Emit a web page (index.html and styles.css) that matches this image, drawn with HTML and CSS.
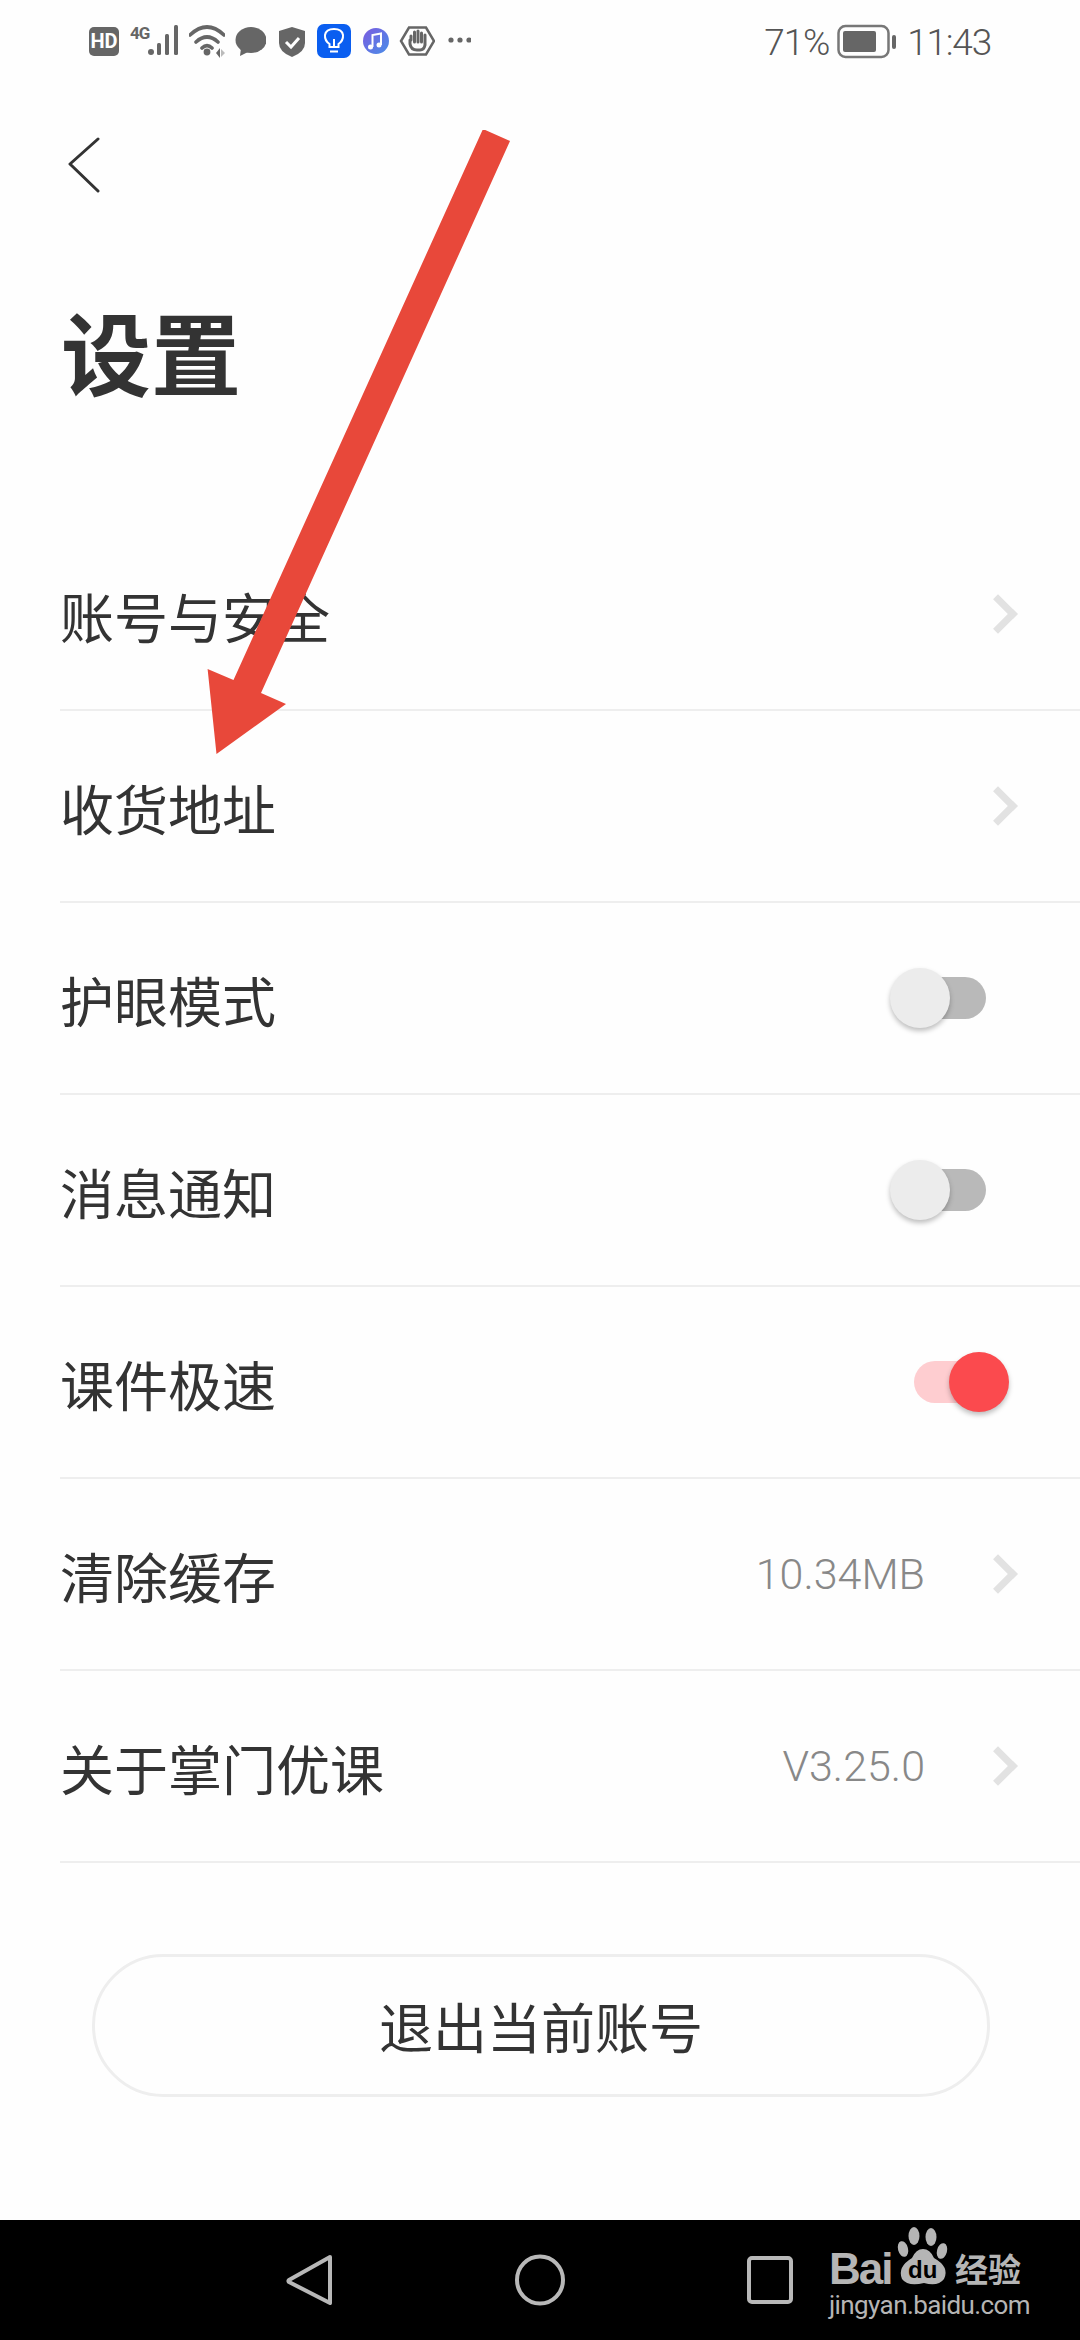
FILE: index.html
```html
<!DOCTYPE html>
<html lang="zh-CN">
<head>
  <meta charset="UTF-8">
  <meta name="viewport" content="width=device-width, initial-scale=1.0">
  <title>设置</title>
  <link rel="stylesheet" href="styles.css">
</head>
<body>
  <div class="status-bar">
    <div class="status-icons">
      <svg width="31" height="60" viewBox="0 0 31 60"><rect x="0" y="27" width="30" height="29" rx="5" fill="#666"/><text x="15" y="48" class="hd-text" text-anchor="middle">HD</text></svg>
      <svg width="49" height="60" viewBox="0 0 49 60"><text x="0" y="39" class="g-text">4G</text><circle cx="21" cy="52" r="3" fill="#666"/><rect x="27" y="43" width="4" height="12" rx="1.5" fill="#666"/><rect x="35" y="34" width="4" height="21" rx="1.5" fill="#666"/><rect x="44" y="25" width="4" height="30" rx="1.5" fill="#666"/></svg>
      <svg width="36" height="60" viewBox="0 0 36 60"><path d="M1 35 Q18 19 35 35 M7 42 Q18 32 29 42 M13 48 Q18 43 23 48" fill="none" stroke="#666" stroke-width="3.6" stroke-linecap="round"/><circle cx="18" cy="52" r="3.4" fill="#666"/><path d="M27 53 l4 -5 v10 z" fill="#666"/><path d="M32 49 l4 4 l-4 4 z" fill="#bbb"/></svg>
      <svg width="31" height="60" viewBox="0 0 31 60"><ellipse cx="16" cy="40" rx="15.5" ry="13" fill="#666"/><path d="M6 48 L5 56 L15 51 z" fill="#666"/></svg>
      <svg width="29" height="60" viewBox="0 0 29 60"><path d="M16 27 L29 31 V43 Q29 52 16 57 Q3 52 3 43 V31 z" fill="#666"/><path d="M10 42 L15 47 L23 38" fill="none" stroke="#fff" stroke-width="3"/></svg>
      <svg width="36" height="60" viewBox="0 0 36 60"><rect x="2" y="24" width="34" height="34" rx="7" fill="#0a5ef0"/><path d="M14.5 44 Q9.5 40.500 10 35 Q11 29 19 29 Q27 29 28 35 Q28.500 40.500 23.500 44 V47 H14.500 z M15 51.500 H23 M19 47 V39" fill="none" stroke="#fff" stroke-width="2"/></svg>
      <svg width="28" height="60" viewBox="0 0 28 60"><defs><linearGradient id="musicFill" x1="0" y1="0" x2="1" y2="1"><stop offset="0" stop-color="#7a5be0"/><stop offset="1" stop-color="#4a8ee8"/></linearGradient></defs><circle cx="15" cy="41" r="13" fill="url(#musicFill)"/><path d="M11.500 47 V35 L20 33.500 V45" fill="none" stroke="#fff" stroke-width="2"/><circle cx="9.500" cy="47" r="2.500" fill="#fff"/><circle cx="18" cy="45" r="2.500" fill="#fff"/></svg>
      <svg width="36" height="60" viewBox="0 0 36 60"><path d="M10 27.500 H27 L35 41 L27 54.500 H10 L2 41 z" fill="none" stroke="#666" stroke-width="2.500"/><path d="M11 40 V44 Q12 50 18 50 H21 Q25 50 26 45 V35 M12 40 V36 M15.500 42 V32 M19 42 V31 M22.500 42 V33" fill="none" stroke="#666" stroke-width="3" stroke-linecap="round"/></svg>
      <svg class="more-dots" width="26" height="60" viewBox="0 0 26 60"><circle cx="6" cy="40" r="2.600" fill="#666"/><circle cx="15" cy="40" r="2.600" fill="#666"/><circle cx="24" cy="40" r="2.600" fill="#666"/></svg>
    </div>
    <div class="status-right">
      <span class="status-text">71%</span>
      <svg class="battery" width="60" height="36" viewBox="0 0 60 36"><rect x="1.500" y="2" width="50" height="31" rx="7" fill="none" stroke="#777" stroke-width="2.500"/><rect x="6" y="7" width="33" height="21" rx="2" fill="#666"/><rect x="55" y="11" width="4" height="14" rx="2" fill="#666"/></svg>
      <span class="status-text">11:43</span>
    </div>
  </div>

  <div class="page">
    <div class="back-row">
      <svg width="34" height="58" viewBox="0 0 34 58"><path d="M31 2 L3 27 L31 54" fill="none" stroke="#333" stroke-width="3" stroke-linecap="round" stroke-linejoin="round"/></svg>
    </div>
    <h1 class="title">设置</h1>

    <div class="list">
      <div class="row"><span class="label">账号与安全</span><i class="chevron"></i></div>
      <div class="row"><span class="label">收货地址</span><i class="chevron"></i></div>
      <div class="row"><span class="label">护眼模式</span><div class="switch"><div class="knob"></div></div></div>
      <div class="row"><span class="label">消息通知</span><div class="switch"><div class="knob"></div></div></div>
      <div class="row"><span class="label">课件极速</span><div class="switch on"><div class="knob"></div></div></div>
      <div class="row"><span class="label">清除缓存</span><span class="value">10.34MB</span><i class="chevron"></i></div>
      <div class="row"><span class="label">关于掌门优课</span><span class="value">V3.25.0</span><i class="chevron"></i></div>
    </div>

    <div class="logout">退出当前账号</div>

    <svg class="arrow" width="310" height="630" viewBox="200 130 310 630"><polygon points="483,129 510,141 261,693 286,704 216.500,754 207.600,669 233.500,680" fill="#e8483a"/></svg>
  </div>

  <div class="nav-bar">
    <svg width="50" height="52" viewBox="0 0 50 52"><path d="M45 3 L4 26 Q3 27 4 28 L45 49 z" fill="none" stroke="#b8b8b8" stroke-width="4" stroke-linejoin="round"/></svg>
    <svg width="50" height="52" viewBox="0 0 50 52"><ellipse cx="25" cy="26" rx="23" ry="23.500" fill="none" stroke="#b8b8b8" stroke-width="4"/></svg>
    <svg width="50" height="52" viewBox="0 0 50 52"><rect x="4" y="4" width="42" height="44" rx="3" fill="none" stroke="#b8b8b8" stroke-width="4"/></svg>

    <div class="watermark">
      <svg class="paw" width="60" height="62" viewBox="0 0 60 62"><ellipse cx="20" cy="11" rx="5.500" ry="9" fill="#b5b5b5"/><ellipse cx="37" cy="12" rx="5.500" ry="9" fill="#b5b5b5"/><ellipse cx="9" cy="24" rx="5" ry="8" transform="rotate(-15 9 24)" fill="#b5b5b5"/><ellipse cx="48" cy="26" rx="5" ry="8" transform="rotate(15 48 26)" fill="#b5b5b5"/><path d="M29 24 Q36 24 40 33 Q56 42 50 54 Q44 62 30 58 Q14 62 8 54 Q3 42 18 33 Q22 24 29 24 z" fill="#b5b5b5"/></svg>
      <span class="wm-bai">Bai</span>
      <span class="wm-du">du</span>
      <span class="wm-cn">经验</span>
      <span class="wm-url">jingyan.baidu.com</span>
    </div>
  </div>
</body>
</html>
```
FILE: styles.css
```css
* {
  box-sizing: border-box;
}
body {
  margin: 0;
  width: 1080px;
  height: 2340px;
  display: flex;
  flex-direction: column;
  background: #fefefe;
  color: #333;
  font-family: "Noto Sans CJK SC", "Noto Sans", sans-serif;
  overflow: hidden;
}

/* status bar */
.status-bar {
  height: 84px;
  display: flex;
  justify-content: space-between;
  padding: 0 89px;
}
.status-icons {
  display: flex;
  gap: 10px;
  height: 60px;
}
.status-icons svg {
  display: block;
}
.hd-text {
  font: bold 20px "Roboto", sans-serif;
  fill: #fff;
}
.g-text {
  font: bold 17px "Roboto", sans-serif;
  fill: #666;
  letter-spacing: -1px;
}
.status-right {
  display: flex;
  align-items: center;
  height: 84px;
}
.status-text {
  font: 300 37px "Roboto", sans-serif;
  letter-spacing: -1.2px;
  color: #555;
}
.battery {
  margin: 0 10px 0 8px;
}

/* page */
.page {
  position: relative;
  flex: 1;
}
.back-row {
  height: 162px;
  padding: 53px 0 0 67px;
}
.back-row svg {
  display: block;
}
.title {
  margin: 0;
  padding: 44px 0 0 61px;
  font-size: 90px;
  font-weight: 700;
  line-height: 120px;
  height: 273px;
  color: #333;
}
.list {
  margin-left: 60px;
}
.row {
  height: 192px;
  display: flex;
  align-items: center;
  padding-right: 63px;
  border-bottom: 2px solid #eee;
}
.label {
  flex: 1;
  padding-top: 3px;
  font-size: 54px;
  color: #333;
}
.value {
  font: 300 43px "Roboto", sans-serif;
  color: #888;
  margin-right: 59px;
}
.chevron {
  width: 28px;
  height: 28px;
  margin-right: 5px;
  border-top: 7px solid #e2e2e2;
  border-right: 7px solid #e2e2e2;
  transform: rotate(45deg);
}

/* switch */
.switch {
  position: relative;
  width: 72px;
  height: 42px;
  margin-right: 31px;
  border-radius: 21px;
  background: #b9b9b9;
}
.knob {
  position: absolute;
  top: -9px;
  left: -24px;
  width: 60px;
  height: 60px;
  border-radius: 50%;
  background: #ececec;
  box-shadow: 0 3px 5px rgba(0, 0, 0, 0.25);
}
.switch.on {
  background: #fecdd0;
}
.switch.on .knob {
  left: 35px;
  background: #fb4a4e;
}

.logout {
  width: 898px;
  height: 143px;
  margin: 91px 0 0 92px;
  border: 3px solid #eee;
  border-radius: 72px;
  display: flex;
  align-items: center;
  justify-content: center;
  font-size: 54px;
  color: #333;
}

/* annotation drawn over the screen */
.arrow {
  position: absolute;
  left: 200px;
  top: 46px;
}

/* nav bar */
.nav-bar {
  position: relative;
  height: 120px;
  background: #000;
  display: flex;
  align-items: center;
  gap: 180px;
  padding-left: 285px;
}
.watermark {
  position: absolute;
  left: 829px;
  top: 5px;
  width: 194px;
  height: 95px;
  color: #b5b5b5;
}
.watermark span {
  position: absolute;
  white-space: nowrap;
}
.paw {
  position: absolute;
  left: 65px;
  top: 0;
}
.wm-bai {
  left: 0;
  top: 25px;
  font: bold 44px/38px "Liberation Sans", sans-serif;
  letter-spacing: -2px;
}
.wm-du {
  left: 79px;
  top: 32px;
  font: bold 24px/26px "Liberation Sans", sans-serif;
  color: #000;
}
.wm-cn {
  left: 126px;
  top: 24px;
  font-size: 33px;
  line-height: 38px;
  font-weight: 700;
}
.wm-url {
  left: 0;
  top: 66px;
  font: 26px/28px "Roboto", sans-serif;
  letter-spacing: -0.6px;
}
```
